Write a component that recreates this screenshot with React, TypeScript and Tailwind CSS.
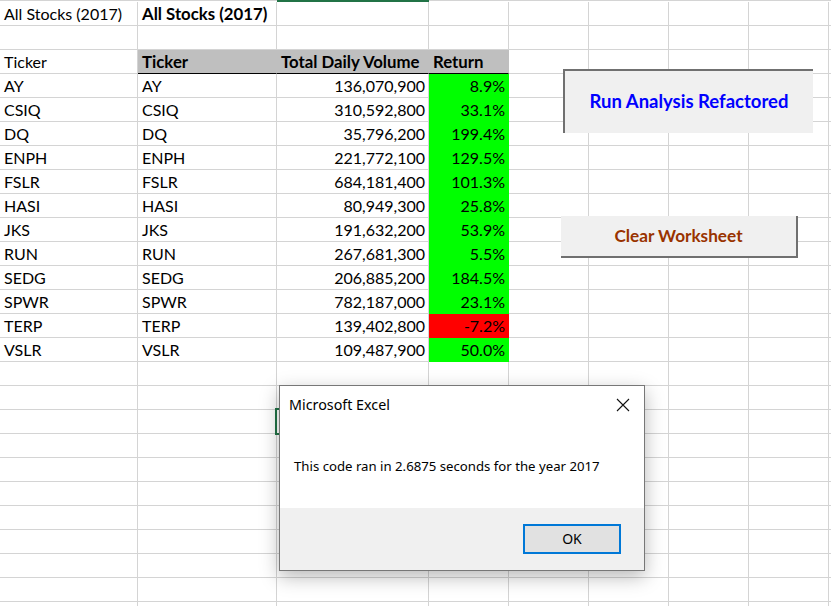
import React from 'react';

type Kind = 'plain' | 'head' | 'green' | 'red';

interface CellData {
    text?: string;
    kind?: Kind;
    bold?: boolean;
    right?: boolean;
}

const widths = [
    'w-[138px]',
    'w-[139px]',
    'w-[152px]',
    'w-[80px]',
    'w-[80px]',
    'w-[80px]',
    'w-[80px]',
    'w-[80px]',
    'w-[2px]',
];

const kindClass: Record<Kind, string> = {
    plain: 'bg-white border-[#d4d4d4]',
    head: 'bg-[#bfbfbf] border-r-[#bfbfbf] border-b-black',
    green: 'bg-[#00ff00] border-[#00ff00]',
    red: 'bg-[#ff0000] border-[#ff0000]',
};

const stocks: [string, string, string][] = [
    ['AY', '136,070,900', '8.9%'],
    ['CSIQ', '310,592,800', '33.1%'],
    ['DQ', '35,796,200', '199.4%'],
    ['ENPH', '221,772,100', '129.5%'],
    ['FSLR', '684,181,400', '101.3%'],
    ['HASI', '80,949,300', '25.8%'],
    ['JKS', '191,632,200', '53.9%'],
    ['RUN', '267,681,300', '5.5%'],
    ['SEDG', '206,885,200', '184.5%'],
    ['SPWR', '782,187,000', '23.1%'],
    ['TERP', '139,402,800', '-7.2%'],
    ['VSLR', '109,487,900', '50.0%'],
];

const buildRows = (): CellData[][] => {
    const rows: CellData[][] = [];
    rows.push([{ text: 'All Stocks (2017)' }, { text: 'All Stocks (2017)', bold: true }]);
    rows.push([]);
    rows.push([
        { text: 'Ticker' },
        { text: 'Ticker', kind: 'head', bold: true },
        { text: 'Total Daily Volume', kind: 'head', bold: true },
        { text: 'Return', kind: 'head', bold: true },
    ]);
    stocks.forEach(([ticker, volume, ret]) => {
        rows.push([
            { text: ticker },
            { text: ticker },
            { text: volume, right: true },
            { text: ret, right: true, kind: ret.startsWith('-') ? 'red' : 'green' },
        ]);
    });
    while (rows.length < 26) rows.push([]);
    return rows;
};

const Cell: React.FC<{ w: string; cell?: CellData }> = ({ w, cell }) => {
    const kind = cell?.kind ?? 'plain';
    return (
        <div
            className={`${w} h-[24px] shrink-0 border-r border-b pt-[1px] leading-[22px] whitespace-nowrap overflow-hidden ${kindClass[kind]} ${
                cell?.right ? 'text-right pr-[3px]' : 'pl-[4px]'
            } ${cell?.bold ? 'font-bold text-[16.8px]' : ''}`}
        >
            {cell?.text}
        </div>
    );
};

const MessageBox: React.FC = () => (
    <div className="absolute left-[279px] top-[385px] w-[366px] h-[186px] border border-[#777777] bg-white shadow-[0_6px_18px_rgba(0,0,0,0.28)] flex flex-col font-['Noto_Sans','Open_Sans',sans-serif] text-black">
        <div className="h-[122px] flex flex-col">
            <div className="flex justify-between items-start pl-[9px] pr-[14px] pt-[9px]">
                <span className="text-[14.3px] leading-[20px]">Microsoft Excel</span>
                <svg width="14" height="14" viewBox="0 0 14 14" className="mt-[3px]">
                    <path d="M1 1 L13 13 M13 1 L1 13" stroke="#111" strokeWidth="1.1" fill="none" />
                </svg>
            </div>
            <p className="pl-[14px] mt-[41px] text-[13.2px] leading-[20px]">
                This code ran in 2.6875 seconds for the year 2017
            </p>
        </div>
        <div className="flex-1 bg-[#f0f0f0] flex justify-end items-start pt-[16px] pr-[23px]">
            <button className="w-[98px] h-[30px] border-2 border-[#0078d7] bg-[#e1e1e1] text-[14px] leading-none">
                OK
            </button>
        </div>
    </div>
);

const App: React.FC = () => {
    const rows = buildRows();

    return (
        <div className="relative w-[831px] h-[606px] overflow-hidden bg-white text-black font-['Lato','Carlito',sans-serif] text-[16px]">
            <div className="flex h-[2px]">
                {widths.map((w, i) => (
                    <div
                        key={i}
                        className={`${w} shrink-0 ${i === 2 ? 'bg-[#217346]' : 'border-t border-[#d4d4d4]'}`}
                    />
                ))}
            </div>
            {rows.map((row, r) => (
                <div key={r} className="flex">
                    {widths.map((w, c) => (
                        <Cell key={c} w={w} cell={row[c]} />
                    ))}
                </div>
            ))}

            <div className="absolute left-[563px] top-[69px] w-[250px] h-[64px] bg-[#f0f0f0] border-t-2 border-l-2 border-[#707070] flex items-center justify-center">
                <span className="text-[18.5px] font-bold text-[#0000ff]">Run Analysis Refactored</span>
            </div>

            <div className="absolute left-[561px] top-[216px] w-[237px] h-[42px] bg-[#f0f0f0] border-r-2 border-b-2 border-[#707070] flex items-center justify-center">
                <span className="text-[17.2px] font-bold text-[#993300]">Clear Worksheet</span>
            </div>

            <div className="absolute left-[275px] top-[408px] w-[156px] h-[27px] border-2 border-[#217346]" />

            <MessageBox />
        </div>
    );
};

export default App;
